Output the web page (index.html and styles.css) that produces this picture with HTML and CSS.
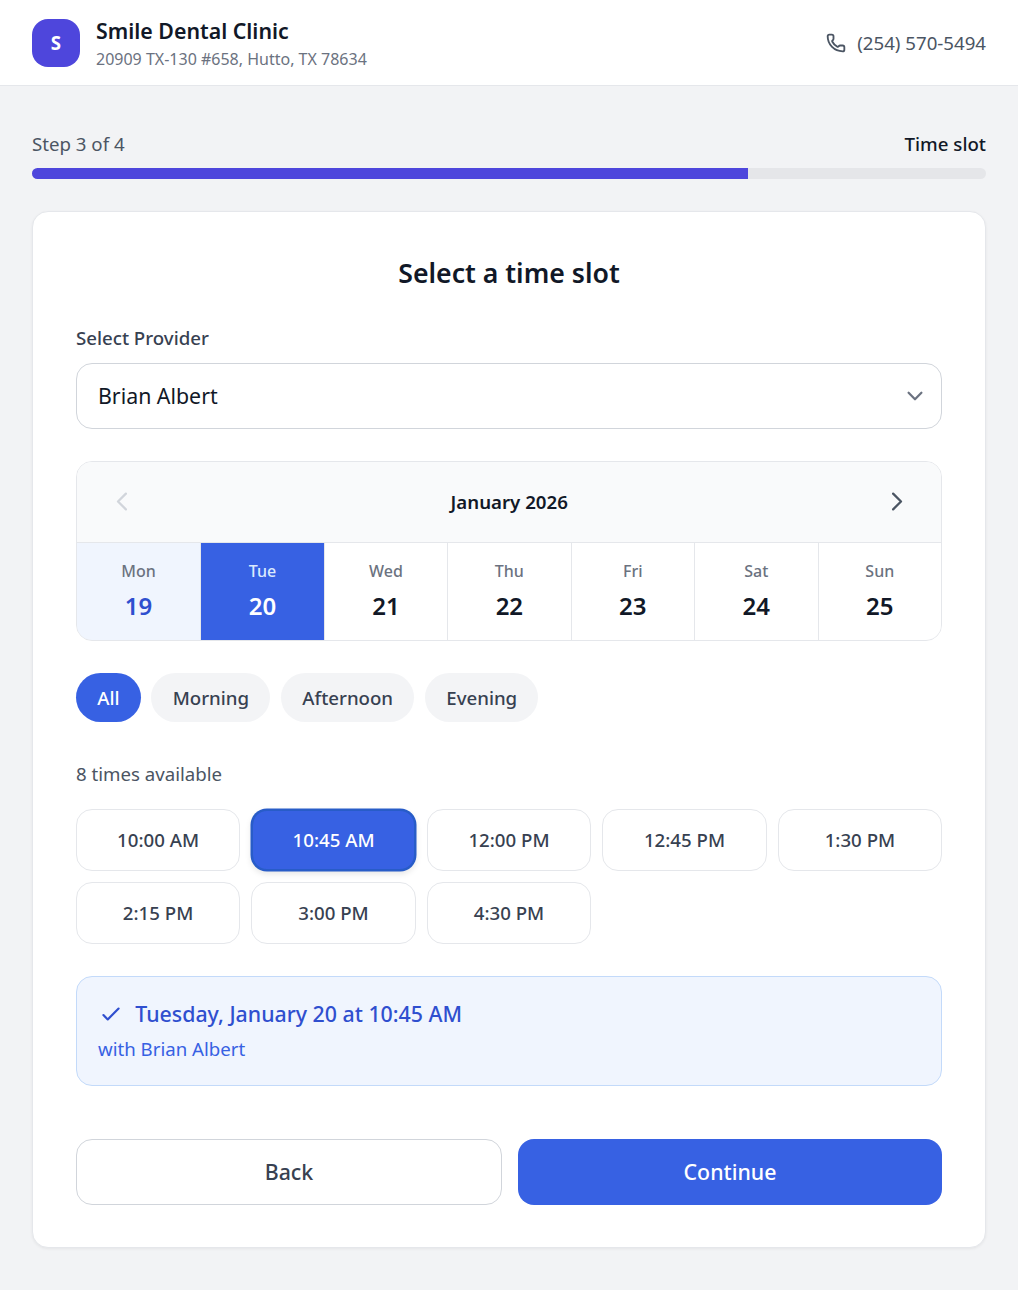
FILE: index.html
```html
<!DOCTYPE html>
<html lang="en">
<head>
<meta charset="UTF-8" />
<meta name="viewport" content="width=device-width, initial-scale=1" />
<title>Smile Dental Clinic</title>
<link rel="stylesheet" href="styles.css">
</head>
<body>

<!-- Header -->
<header class="header">
    <div class="logo">S</div>
    <div class="clinic">
        <h1>Smile Dental Clinic</h1>
        <p>20909 TX-130 #658, Hutto, TX 78634</p>
    </div>
    <a class="phone" href="tel:2545705494">
        <svg width="20" height="20" viewBox="0 0 24 24" fill="none" stroke="currentColor" stroke-width="2.2" stroke-linecap="round" stroke-linejoin="round"><path d="M13.832 16.568a1 1 0 0 0 1.213-.303l.355-.465A2 2 0 0 1 17 15h3a2 2 0 0 1 2 2v3a2 2 0 0 1-2 2A18 18 0 0 1 2 4a2 2 0 0 1 2-2h3a2 2 0 0 1 2 2v3a2 2 0 0 1-.8 1.6l-.468.351a1 1 0 0 0-.292 1.233 14 14 0 0 0 6.392 6.384"/></svg>
        <span>(254) 570-5494</span>
    </a>
</header>

<main class="container">

    <!-- Progress -->
    <div class="steps">
        <span>Step 3 of 4</span>
        <span class="step-name">Time slot</span>
    </div>
    <div class="progress">
        <div class="progress-fill" style="width: 75%"></div>
    </div>

    <section class="card">
        <h2>Select a time slot</h2>

        <div class="label">Select Provider</div>
        <button class="select" type="button">
            <span>Brian Albert</span>
            <svg width="32" height="32" viewBox="0 0 20 20" fill="none" stroke="currentColor" stroke-width="1.4" stroke-linecap="round" stroke-linejoin="round"><path d="M6 8l4 4 4-4"/></svg>
        </button>

        <!-- Week calendar -->
        <div class="calendar">
            <div class="calendar-head">
                <button class="arrow" type="button" disabled>
                    <svg width="27" height="27" viewBox="0 0 24 24" fill="none" stroke="currentColor" stroke-width="2" stroke-linecap="round" stroke-linejoin="round"><path d="M15 19l-7-7 7-7"/></svg>
                </button>
                <span>January 2026</span>
                <button class="arrow" type="button">
                    <svg width="27" height="27" viewBox="0 0 24 24" fill="none" stroke="currentColor" stroke-width="2" stroke-linecap="round" stroke-linejoin="round"><path d="M9 5l7 7-7 7"/></svg>
                </button>
            </div>
            <div class="days">
                <button class="day today" type="button"><span>Mon</span><b>19</b></button>
                <button class="day active" type="button"><span>Tue</span><b>20</b></button>
                <button class="day" type="button"><span>Wed</span><b>21</b></button>
                <button class="day" type="button"><span>Thu</span><b>22</b></button>
                <button class="day" type="button"><span>Fri</span><b>23</b></button>
                <button class="day" type="button"><span>Sat</span><b>24</b></button>
                <button class="day" type="button"><span>Sun</span><b>25</b></button>
            </div>
        </div>

        <div class="filters">
            <button class="pill active" type="button">All</button>
            <button class="pill" type="button">Morning</button>
            <button class="pill" type="button">Afternoon</button>
            <button class="pill" type="button">Evening</button>
        </div>

        <!-- Times -->
        <p class="count">8 times available</p>
        <div class="slots">
            <button class="slot" type="button">10:00 AM</button>
            <button class="slot active" type="button">10:45 AM</button>
            <button class="slot" type="button">12:00 PM</button>
            <button class="slot" type="button">12:45 PM</button>
            <button class="slot" type="button">1:30 PM</button>
            <button class="slot" type="button">2:15 PM</button>
            <button class="slot" type="button">3:00 PM</button>
            <button class="slot" type="button">4:30 PM</button>
        </div>

        <div class="summary">
            <div class="summary-date">
                <svg width="26" height="26" viewBox="0 0 24 24" fill="none" stroke="currentColor" stroke-width="2" stroke-linecap="round" stroke-linejoin="round"><path d="M5 13l4 4L19 7"/></svg>
                <span>Tuesday, January 20 at 10:45 AM</span>
            </div>
            <p>with Brian Albert</p>
        </div>

        <div class="actions">
            <button class="btn btn-back" type="button">Back</button>
            <button class="btn btn-next" type="button">Continue</button>
        </div>
    </section>

</main>
</body>
</html>
```
FILE: styles.css
```css
* {
    box-sizing: border-box;
}
body {
    margin: 0;
    min-height: 1290px;
    font-family: "Noto Sans", sans-serif;
    font-size: 18.667px;
    line-height: 26.667px;
    background: #f2f3f5;
    color: #111827;
}
h1, h2, p {
    margin: 0;
}
button {
    margin: 0;
    padding: 0;
    border: none;
    background: none;
    font: inherit;
    color: inherit;
    cursor: pointer;
}
svg {
    display: block;
    flex-shrink: 0;
}

/* Header */
.header {
    display: flex;
    align-items: center;
    height: 86px;
    padding: 0 32px;
    background: #fff;
    border-bottom: 1px solid #e5e7eb;
}
.logo {
    width: 48px;
    height: 48px;
    margin-right: 16px;
    border-radius: 16px;
    background: #4e46dc;
    color: #fff;
    font-weight: 700;
    line-height: 48px;
    text-align: center;
}
.clinic h1 {
    font-size: 21.333px;
    line-height: 32px;
    font-weight: 600;
}
.clinic p {
    font-size: 16px;
    line-height: 24px;
    color: #6b7280;
}
.phone {
    display: flex;
    align-items: center;
    gap: 11px;
    margin-left: auto;
    color: #4b5563;
    text-decoration: none;
}
.phone svg {
    margin-top: 1px;
}
.phone span {
    padding-top: 1px;
}

/* Progress */
.container {
    padding: 45px 32px 42px;
}
.steps {
    display: flex;
    justify-content: space-between;
    margin-bottom: 10px;
    color: #4b5563;
}
.step-name {
    font-weight: 500;
    color: #111827;
}
.progress {
    height: 11px;
    border-radius: 6px;
    overflow: hidden;
    background: #e5e6e9;
}
.progress-fill {
    height: 100%;
    background: #4e46dc;
}

/* Card */
.card {
    margin-top: 32px;
    height: 1037px;
    padding: 43px;
    background: #fff;
    border: 1px solid #e5e7eb;
    border-radius: 16px;
    box-shadow: 0 1px 3px rgba(0,0,0,0.06);
}
.card h2 {
    font-size: 26.667px;
    line-height: 37.333px;
    font-weight: 600;
    text-align: center;
}
.label {
    margin: 33px 0 11px;
    font-weight: 500;
    color: #374151;
}
.select {
    display: flex;
    justify-content: space-between;
    align-items: center;
    width: 100%;
    height: 66px;
    padding: 0 10px 0 21px;
    border: 1px solid #d1d5db;
    border-radius: 16px;
    font-size: 21.333px;
}
.select span {
    padding-top: 2px;
}
.select svg {
    color: #6b7280;
}

/* Calendar */
.calendar {
    margin-top: 32px;
    border: 1px solid #e5e7eb;
    border-radius: 16px;
    overflow: hidden;
}
.calendar-head {
    display: flex;
    justify-content: space-between;
    align-items: center;
    height: 81px;
    padding: 0 20.5px 0 21px;
    background: #f9fafb;
    border-bottom: 1px solid #e5e7eb;
    font-weight: 600;
}
.calendar-head span {
    padding-top: 2px;
}
.arrow {
    padding: 10.667px;
    color: #4b5563;
}
.arrow:disabled {
    color: #d1d5db;
}
.days {
    display: grid;
    grid-template-columns: 123.2px repeat(6, 1fr);
    gap: 1px;
    background: #e5e7eb;
}
.day {
    height: 97px;
    padding-top: 3px;
    background: #fff;
}
.day span, .day b {
    display: block;
}
.day span {
    font-size: 16px;
    line-height: 21.333px;
    font-weight: 500;
    color: #6b7280;
}
.day b {
    margin-top: 4.5px;
    font-size: 24px;
    line-height: 37.333px;
    font-weight: 600;
}
.day.today {
    background: #f0f5fe;
}
.day.today b {
    color: #2f4fcf;
}
.day.active {
    background: #3761e3;
    color: #fff;
}
.day.active span {
    color: #dbeafe;
}

/* Filters */
.filters {
    display: flex;
    gap: 10.8px;
    margin-top: 32px;
}
.pill {
    height: 49px;
    padding: 2px 21.2px 0;
    border-radius: 25px;
    background: #f3f4f6;
    color: #374151;
    font-weight: 500;
}
.pill.active {
    background: #3761e3;
    color: #fff;
}

/* Time slots */
.count {
    margin: 39px 0 22px;
    color: #4b5563;
}
.slots {
    display: grid;
    grid-template-columns: repeat(5, 1fr);
    gap: 11px 11.3px;
}
.slot {
    height: 62px;
    border: 1px solid #e5e7eb;
    border-radius: 16px;
    font-weight: 500;
    color: #374151;
}
.slot.active {
    background: #3761e3;
    border: 2px solid #285cc8;
    color: #fff;
    box-shadow: 0 0 0 0.5px #285cc8, 0 3px 6px rgba(0,0,0,0.1);
}

/* Selected time */
.summary {
    height: 110px;
    margin-top: 32px;
    padding: 21px;
    background: #f0f5fe;
    border: 1px solid #c3dafa;
    border-radius: 16px;
    color: #3761e3;
}
.summary-date {
    display: flex;
    align-items: center;
    gap: 11.3px;
    font-size: 21.333px;
    line-height: 32px;
    font-weight: 500;
    color: #2f4fcf;
}
.summary p {
    margin-top: 6px;
}

/* Buttons */
.actions {
    display: flex;
    gap: 16px;
    margin-top: 53px;
}
.btn {
    height: 66px;
    border-radius: 16px;
    font-size: 21.333px;
    font-weight: 500;
}
.btn-back {
    width: 426px;
    border: 1px solid #d1d5db;
    color: #374151;
}
.btn-next {
    flex: 1;
    background: #3761e3;
    color: #fff;
}
```
